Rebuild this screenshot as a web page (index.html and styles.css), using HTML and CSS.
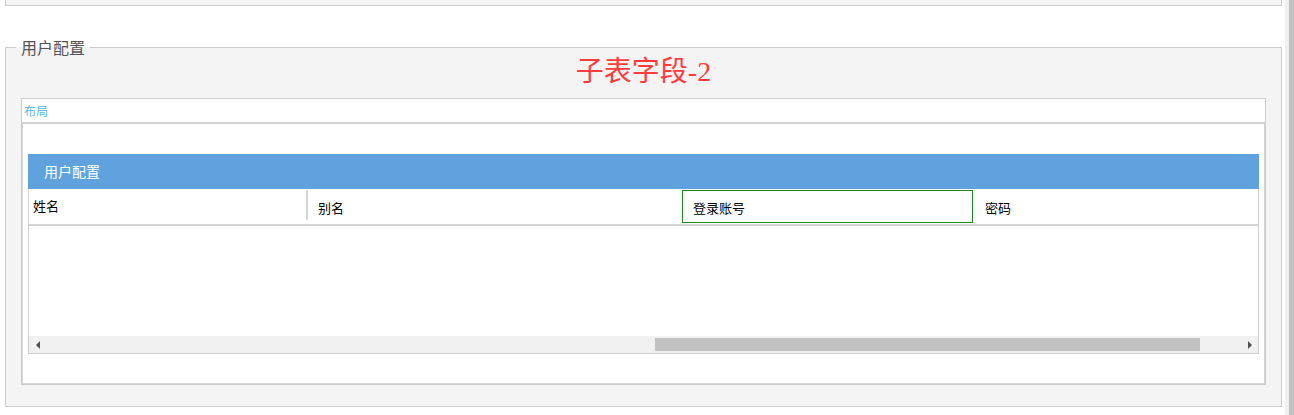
FILE: index.html
```html
<!DOCTYPE html>
<html lang="zh-CN">
<head>
    <meta charset="UTF-8">
    <meta name="viewport" content="width=device-width, initial-scale=1.0">
    <title>用户配置</title>
    <link rel="stylesheet" href="styles.css">
</head>
<body>
    <div class="page">
        <div class="content">
            <div class="prev-panel"></div>

            <fieldset class="group">
                <legend>用户配置</legend>
                <h2 class="sub-title">子表字段-2</h2>

                <div class="layout-box">
                    <div class="layout-head">布局</div>
                    <div class="layout-body">
                        <div class="grid">
                            <div class="grid-title">用户配置</div>
                            <div class="grid-view">
                                <div class="grid-cols">
                                    <div class="col col-name">姓名</div>
                                    <div class="col-split"></div>
                                    <div class="col col-alias">别名</div>
                                    <div class="col col-account">登录账号</div>
                                    <div class="col col-pwd">密码</div>
                                </div>
                                <div class="grid-body"></div>
                                <div class="hscroll">
                                    <div class="hs-btn"><span class="arrow-left"></span></div>
                                    <div class="hs-track">
                                        <div class="hs-thumb" style="margin-left: 609px; width: 545px;"></div>
                                    </div>
                                    <div class="hs-btn"><span class="arrow-right"></span></div>
                                </div>
                            </div>
                        </div>
                    </div>
                </div>
            </fieldset>
        </div>

        <div class="vscroll"><div class="vs-thumb"></div></div>
    </div>
</body>
</html>
```

FILE: styles.css
```css
html, body {
    margin: 0;
    padding: 0;
    height: 100%;
    overflow: hidden;
}
body {
    font-family: "Noto Sans CJK SC", "Noto Sans", sans-serif;
    background-color: #fff;
    color: #000;
}
.page {
    display: flex;
    height: 100%;
}
.content {
    width: 1285px;
    flex: none;
}
.vscroll {
    flex: 1;
    display: flex;
    justify-content: flex-end;
    background-color: #f0f0f0;
}
.vs-thumb {
    width: 5px;
    background-color: #c1c1c1;
}

/* previous section, scrolled mostly out of view */
.prev-panel {
    height: 5px;
    margin: 0 3px 0 5px;
    background-color: #f4f4f4;
    border: 1px solid #ccc;
    border-top: none;
}

.group {
    margin: 31px 3px 0 5px;
    padding: 0 15px 21px;
    border: 1px solid #ccc;
    background-color: #f4f4f4;
    min-width: 0;
}
.group legend {
    margin-left: -5px;
    padding: 0 5px;
    font-size: 16px;
    line-height: 20px;
    color: #555;
}
.sub-title {
    margin: 0 0 12px;
    font-family: "Liberation Serif", "Noto Sans CJK SC", serif;
    font-size: 28px;
    font-weight: normal;
    line-height: 29px;
    text-align: center;
    color: #ff3b3b;
}

.layout-box {
    background-color: #fff;
    border: 1px solid #ccc;
}
.layout-head {
    height: 23px;
    padding-left: 2px;
    font-size: 12px;
    line-height: 23px;
    color: #59b9ec;
    border-bottom: 1px solid #d4d4d4;
}
.layout-body {
    border: 1px solid #d4d4d4;
    padding: 30px 5px 29px;
}

.grid-title {
    height: 35px;
    padding-left: 16px;
    background-color: #5fa2dd;
    color: #fff;
    font-size: 14px;
    line-height: 35px;
}
.grid-view {
    border: 1px solid #d0d0d0;
    border-top: none;
}
.grid-cols {
    display: flex;
    height: 35px;
    border-bottom: 2px solid #d4d4d4;
    font-size: 13px;
}
.col {
    display: flex;
    align-items: center;
    box-sizing: border-box;
}
.col-name {
    width: 277px;
    padding: 0 0 3px 4px;
}
.col-split {
    width: 2px;
    margin: 1px 0 4px;
    background-color: #d4d4d4;
}
.col-alias {
    width: 374px;
    padding: 2px 0 0 10px;
}
.col-account {
    width: 291px;
    margin: 1px 0;
    padding: 1px 0 0 10px;
    border: 1px solid #1a8a1a;
}
.col-pwd {
    flex: 1;
    padding: 2px 0 0 12px;
}
.grid-body {
    height: 110px;
}

.hscroll {
    display: flex;
    height: 17px;
    background-color: #f1f1f1;
}
.hs-btn {
    width: 17px;
    display: flex;
    align-items: center;
    justify-content: center;
}
.arrow-left {
    width: 0;
    height: 0;
    border-top: 4px solid transparent;
    border-bottom: 4px solid transparent;
    border-right: 4px solid #505050;
}
.arrow-right {
    width: 0;
    height: 0;
    border-top: 4px solid transparent;
    border-bottom: 4px solid transparent;
    border-left: 4px solid #505050;
}
.hs-track {
    flex: 1;
    display: flex;
    align-items: center;
}
.hs-thumb {
    height: 13px;
    background-color: #c1c1c1;
}
```
